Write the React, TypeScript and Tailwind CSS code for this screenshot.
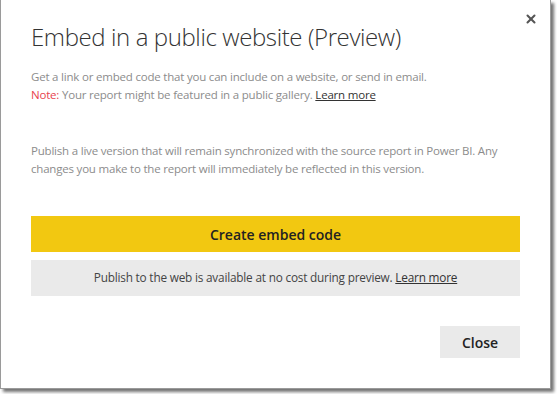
import { X } from "lucide-react";

export default function App() {
  return (
    <div className="w-[557px] h-[394px] bg-white overflow-hidden" style={{ fontFamily: '"Open Sans", "Noto Sans", sans-serif' }}>
      <div className="relative w-[551px] h-[389px] bg-white border-l border-r border-b border-[#9a9a9a] shadow-[3px_3px_3px_rgba(0,0,0,0.55)] pl-[30px] pr-[30px] pt-[21px]">
        <button className="absolute right-[12px] top-[12px] text-[#555]">
          <X className="w-[14px] h-[14px]" strokeWidth={3.5} />
        </button>
        <h1 className="text-[24px] leading-[32px] font-light text-[#333] tracking-[-0.4px]">
          Embed in a public website (Preview)
        </h1>
        <div className="mt-[15px] text-[11.5px] leading-[18px] text-[#8c8c8c] tracking-[-0.2px]">
          <p>Get a link or embed code that you can include on a website, or send in email.</p>
          <p>
            <span className="text-[#e8424e]">Note:</span> Your report might be featured in a public gallery.{" "}
            <a className="text-[#333] underline">Learn more</a>
          </p>
        </div>
        <div className="mt-[38px] text-[11.5px] leading-[18px] text-[#8c8c8c] tracking-[-0.2px]">
          <p>Publish a live version that will remain synchronized with the source report in Power BI. Any</p>
          <p>changes you make to the report will immediately be reflected in this version.</p>
        </div>
        <button className="mt-[38px] w-full h-[36px] bg-[#f2c811] text-[14px] font-semibold text-[#222]">
          Create embed code
        </button>
        <div className="mt-[8px] w-full h-[36px] bg-[#eaeaea] flex items-center justify-center text-[11.8px] text-[#444] tracking-[-0.2px]">
          <span>
            Publish to the web is available at no cost during preview. <a className="text-[#333] underline">Learn more</a>
          </span>
        </div>
        <div className="mt-[30px] flex justify-end">
          <button className="w-[80px] h-[32px] bg-[#eaeaea] text-[14px] font-semibold text-[#222]">Close</button>
        </div>
      </div>
    </div>
  );
}
